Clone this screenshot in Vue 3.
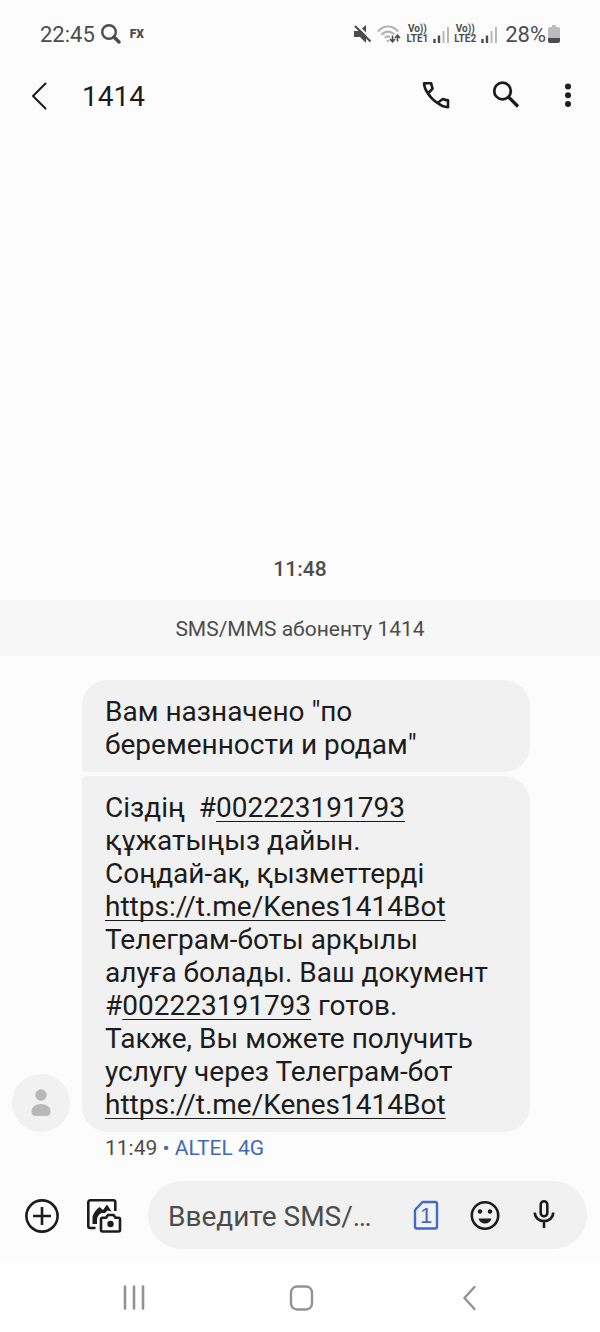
<template>
  <div class="screen">
    <div class="status-bar">
      <span class="clock">22:45</span>
      <svg class="status-search" viewBox="0 0 20 20" width="20" height="20">
        <circle cx="8" cy="8" r="6.8" fill="none" stroke="#4c4c4c" stroke-width="2.4" />
        <path d="M13 13 18 18" stroke="#4c4c4c" stroke-width="3.4" stroke-linecap="round" />
      </svg>
      <span class="fx">FX</span>
      <div class="status-right">
        <svg viewBox="0 0 18 18" width="18" height="18">
          <path d="M0 6h5l7-6v18l-6-6H0z" fill="#4c4c4c" />
          <path d="M2.500-.5 18.500 15.500" stroke="#fcfcfc" stroke-width="2.200" />
          <path d="M1 1 16.500 16.500" stroke="#4c4c4c" stroke-width="2.200" />
        </svg>
        <svg viewBox="0 0 24 20" width="24" height="20">
          <g fill="none" stroke="#b4b4b4" stroke-width="2.2">
            <path d="M1 7.5C6.500.8 15.500.8 21 7.500" />
            <path d="M4.500 10.800c3.800-4.200 9.200-4.200 13 0" />
            <path d="M7.800 14c2-2.200 4.400-2.200 6.400 0" />
          </g>
          <path d="M9 16h4l-2 2.500z" fill="#b4b4b4" />
          <path d="M13 10.500h9v8.500h-9z" fill="#fcfcfc" />
          <path d="M15.500 11.500v6M13 15l2.500 2.700L18 15M20.500 17.500v-6M18 14l2.500-2.700L23 14" fill="none" stroke="#4c4c4c" stroke-width="1.600" />
        </svg>
        <template v-for="sim in sims" :key="sim">
          <span class="volte"><span>Vo))</span><span>{{ sim }}</span></span>
          <svg class="bars" viewBox="0 0 16 17" width="16" height="17">
            <path d="M1.500 13v4M6 9.500V17" stroke="#4c4c4c" stroke-width="2.400" />
            <path d="M10.500 5v12M15 1v16" stroke="#b8b8b8" stroke-width="2" />
          </svg>
        </template>
        <span class="percent">28%</span>
        <svg viewBox="0 0 12 18" width="12" height="18">
          <path d="M4 0h4v2h2a2 2 0 0 1 2 2v9H0V4a2 2 0 0 1 2-2h2z" fill="#bcbcbc" />
          <path d="M0 13h12v3a2 2 0 0 1-2 2H2a2 2 0 0 1-2-2z" fill="#4c4c4c" />
        </svg>
      </div>
    </div>

    <header class="app-bar">
      <button class="icon-btn" aria-label="Назад">
        <svg viewBox="0 0 36 36" width="36" height="36">
          <path d="M24.500 5.500 12 18l12.500 12.500" fill="none" stroke="#1c1c1c" stroke-width="2" stroke-linecap="round" stroke-linejoin="round" />
        </svg>
      </button>
      <h1>1414</h1>
      <div class="actions">
        <button class="icon-btn" aria-label="Позвонить">
          <svg viewBox="0 0 36 36" width="36" height="36" fill="none" stroke="#1c1c1c" stroke-width="2.600" stroke-linejoin="round">
            <path d="M6 5.300h7.200c.3 2 .8 3.700 1.400 5.200l-4.600 5C7.700 12.500 6.300 9 6 5.300z" />
            <path d="M10 15.500c2.400 4 5 6.500 9.500 9.500" />
            <path d="M30 29.200v-6.800c-2-.3-3.700-.8-5.200-1.400L19.500 25c3 2.400 6.500 3.900 10.500 4.200z" />
          </svg>
        </button>
        <button class="icon-btn" aria-label="Поиск">
          <svg viewBox="0 0 36 36" width="36" height="36" fill="none" stroke="#1c1c1c">
            <circle cx="14.500" cy="13" r="8.300" stroke-width="2.800" />
            <path d="M20.500 19 30 28.500" stroke-width="3.200" />
          </svg>
        </button>
        <button class="icon-btn narrow" aria-label="Ещё">
          <svg viewBox="0 0 20 36" width="20" height="36" fill="#1c1c1c">
            <circle cx="10" cy="8.500" r="3" />
            <circle cx="10" cy="17.300" r="3" />
            <circle cx="10" cy="26" r="3" />
          </svg>
        </button>
      </div>
    </header>

    <main class="thread">
      <time class="stamp">11:48</time>
      <p class="notice">SMS/MMS абоненту 1414</p>
      <div class="group">
        <div class="avatar">
          <svg viewBox="0 0 20 28" width="20" height="28" fill="#b8b8b8">
            <circle cx="10" cy="6" r="5.700" />
            <path d="M.5 22.500c0-4.500 4.300-7.500 9.500-7.500s9.500 3 9.500 7.500c0 3-1.500 4.500-4 4.500h-11c-2.500 0-4-1.500-4-4.500z" />
          </svg>
        </div>
        <div class="bubbles">
          <div v-for="(lines, i) in messages" :key="i" class="bubble">
            <div v-for="(line, j) in lines" :key="j" class="line">
              <template v-for="(part, k) in line" :key="k">
                <a v-if="part.href" :href="part.href">{{ part.text }}</a>
                <span v-else>{{ part.text }}</span>
              </template>
            </div>
          </div>
        </div>
        <div class="meta">11:49 <span class="carrier">• ALTEL 4G</span></div>
      </div>
    </main>

    <form class="composer" @submit.prevent>
      <button type="button" class="icon-btn" aria-label="Добавить">
        <svg viewBox="0 0 36 36" width="36" height="36" fill="none" stroke="#1c1c1c" stroke-width="2.600">
          <circle cx="18" cy="19" r="15.600" />
          <path d="M18 10v18M9 19h18" />
        </svg>
      </button>
      <button type="button" class="icon-btn" aria-label="Галерея">
        <svg viewBox="0 0 36 36" width="36" height="36" fill="none" stroke="#1c1c1c" stroke-width="2.600">
          <path d="M9.500 31H4.300a2 2 0 0 1-2-2V5.300a2 2 0 0 1 2-2h23a2 2 0 0 1 2 2V14" />
          <path d="M6.500 27v-7c1-4 3.500-7.500 7-10l3.500 3L21 7.500l4.500 7-4-1-2.500 2.500h-3.500c-3 1.500-4.500 4-4.500 7v4z" fill="#1c1c1c" stroke="none" />
          <path d="M16.500 20.700H20l2-2.700h5.500l2 2.700h3a1.500 1.500 0 0 1 1.500 1.500v10.800a1.500 1.500 0 0 1-1.500 1.500h-16a1.500 1.500 0 0 1-1.500-1.500V22.200a1.500 1.500 0 0 1 1.500-1.500z" />
          <circle cx="24.500" cy="27" r="3.200" fill="#1c1c1c" stroke="none" />
        </svg>
      </button>
      <div class="field">
        <input v-model="draft" type="text" placeholder="Введите SMS/…" aria-label="Введите SMS/MMS" />
        <button type="button" class="icon-btn" aria-label="SIM 1">
          <svg viewBox="0 0 36 36" width="36" height="36">
            <path d="M14.500 5H27a2 2 0 0 1 2 2v22.500a2 2 0 0 1-2 2H9a2 2 0 0 1-2-2V13z" fill="none" stroke="#4169c8" stroke-width="2.400" stroke-linejoin="round" />
            <text x="18" y="26" class="sim-digit">1</text>
          </svg>
        </button>
        <button type="button" class="icon-btn" aria-label="Эмодзи">
          <svg viewBox="0 0 36 36" width="36" height="36" fill="#1c1c1c">
            <circle cx="18" cy="18.500" r="13.200" fill="none" stroke="#1c1c1c" stroke-width="2.600" />
            <circle cx="13" cy="14.500" r="2.200" />
            <circle cx="23" cy="14.500" r="2.200" />
            <path d="M11.500 21.500h13c-1 3.200-3.500 5-6.500 5s-5.500-1.800-6.500-5z" />
          </svg>
        </button>
        <button type="button" class="icon-btn" aria-label="Голосовой ввод">
          <svg viewBox="0 0 36 36" width="36" height="36" fill="none" stroke="#1c1c1c" stroke-width="2.600">
            <rect x="14.700" y="4.300" width="6.600" height="15" rx="3.300" />
            <path d="M8.800 15.500c0 5 4 8.600 9.200 8.600s9.200-3.600 9.200-8.600M18 24v7" />
          </svg>
        </button>
      </div>
    </form>

    <nav class="nav-bar">
      <button class="icon-btn" aria-label="Недавние">
        <svg viewBox="0 0 36 36" width="36" height="36">
          <path d="M9 7.500v22M18 7.500v22M27 7.500v22" stroke="#929292" stroke-width="2.600" stroke-linecap="round" />
        </svg>
      </button>
      <button class="icon-btn" aria-label="Главный экран">
        <svg viewBox="0 0 36 36" width="36" height="36">
          <rect x="7" y="7.500" width="21" height="23" rx="6" fill="none" stroke="#929292" stroke-width="2.400" />
        </svg>
      </button>
      <button class="icon-btn" aria-label="Назад">
        <svg viewBox="0 0 36 36" width="36" height="36">
          <path d="M22.500 8 12.500 19l10 11" fill="none" stroke="#929292" stroke-width="2.400" stroke-linecap="round" />
        </svg>
      </button>
    </nav>
  </div>
</template>

<script setup>
import { ref } from 'vue';

const draft = ref('');
const sims = ['LTE1', 'LTE2'];

const bot = { text: 'https://t.me/Kenes1414Bot', href: 'https://t.me/Kenes1414Bot' };
const doc = { text: '002223191793', href: 'tel:002223191793' };

// Each message is a list of lines, each line a list of text and link parts
const messages = [
  [
    [{ text: 'Вам назначено "по' }],
    [{ text: 'беременности и родам"' }],
  ],
  [
    [{ text: 'Сіздің  #' }, doc],
    [{ text: 'құжатыңыз дайын.' }],
    [{ text: 'Соңдай-ақ, қызметтерді' }],
    [bot],
    [{ text: 'Телеграм-боты арқылы' }],
    [{ text: 'алуға болады. Ваш документ' }],
    [{ text: '#' }, doc, { text: ' готов.' }],
    [{ text: 'Также, Вы можете получить' }],
    [{ text: 'услугу через Телеграм-бот' }],
    [bot],
  ],
];
</script>

<style>
body {
  margin: 0;
  background: #fcfcfc;
}
</style>

<style scoped>
.screen {
  display: flex;
  flex-direction: column;
  min-height: 100vh;
  background: #fcfcfc;
  color: #1c1c1c;
  font-family: Roboto, "Noto Sans", sans-serif;
}

svg {
  display: block;
  flex: none;
}

.icon-btn {
  flex: none;
  width: 36px;
  height: 36px;
  padding: 0;
  border: 0;
  background: none;
}

.icon-btn.narrow {
  width: 20px;
}

.status-bar {
  display: flex;
  align-items: center;
  height: 68px;
  padding: 0 40px;
  color: #4c4c4c;
  font-size: 22px;
}

.status-search {
  margin-left: 6px;
}

.fx {
  margin-left: 9px;
  font-size: 12px;
  font-weight: 900;
}

.status-right {
  display: flex;
  align-items: center;
  gap: 5px;
  margin-left: auto;
}

.volte {
  display: flex;
  flex-direction: column;
  align-items: center;
  font-size: 10px;
  font-weight: 700;
  line-height: 10px;
}

.percent {
  margin-left: 3px;
  margin-right: -3px;
}

.app-bar {
  display: flex;
  align-items: center;
  gap: 25px;
  height: 56px;
  padding: 0 22px 0 21px;
}

h1 {
  margin: 0;
  font-size: 28px;
  font-weight: 400;
}

.actions {
  display: flex;
  gap: 34px;
  margin-left: auto;
}

.thread {
  display: flex;
  flex: 1;
  flex-direction: column;
  justify-content: flex-end;
}

.stamp {
  padding: 16px 0;
  color: #4c4c4c;
  font-size: 21px;
  font-weight: 500;
  line-height: 30px;
  text-align: center;
}

.notice {
  margin: 0 0 24px;
  padding: 2px 0 0;
  background: #f7f7f7;
  color: #4c4c4c;
  font-size: 21px;
  line-height: 54px;
  text-align: center;
}

.group {
  display: grid;
  grid-template-columns: 58px 1fr;
  column-gap: 12px;
  padding: 0 70px 0 12px;
}

.avatar {
  display: flex;
  align-items: center;
  justify-content: center;
  align-self: end;
  height: 58px;
  border-radius: 50%;
  background: #f1f1f1;
}

.bubbles {
  display: flex;
  flex-direction: column;
  gap: 4px;
}

.bubble {
  padding: 15px 23px 11px;
  border-radius: 4px 26px 26px 26px;
  background: #f1f1f1;
  font-size: 28px;
  line-height: 33px;
}

.bubble:first-child {
  border-radius: 26px 26px 26px 4px;
}

.line {
  white-space: pre-wrap;
}

.line a {
  color: inherit;
  text-decoration-thickness: 1px;
  text-underline-offset: 4px;
  text-decoration-skip-ink: none;
}

.meta {
  grid-column: 2;
  padding-left: 23px;
  color: #4c4c4c;
  font-size: 21px;
  line-height: 32px;
}

.carrier {
  color: #4169b8;
}

.composer {
  display: flex;
  align-items: center;
  gap: 26px;
  padding: 17px 13px 13px 24px;
}

.field {
  display: flex;
  flex: 1;
  align-items: center;
  gap: 23px;
  min-width: 0;
  height: 68px;
  padding: 0 25px 0 20px;
  border-radius: 34px;
  background: #f1f1f1;
}

input {
  flex: 1;
  min-width: 0;
  padding: 2px 0 0;
  border: 0;
  outline: 0;
  background: none;
  color: #1c1c1c;
  font-family: inherit;
  font-size: 28px;
}

input::placeholder {
  color: #4c4c4c;
  opacity: 1;
}

.sim-digit {
  fill: #4169c8;
  font-size: 22px;
  text-anchor: middle;
}

.nav-bar {
  display: grid;
  grid-template-columns: repeat(3, 1fr);
  align-items: center;
  justify-items: center;
  height: 70px;
  padding: 0 46px 0 50px;
  background: #fff;
}
</style>
